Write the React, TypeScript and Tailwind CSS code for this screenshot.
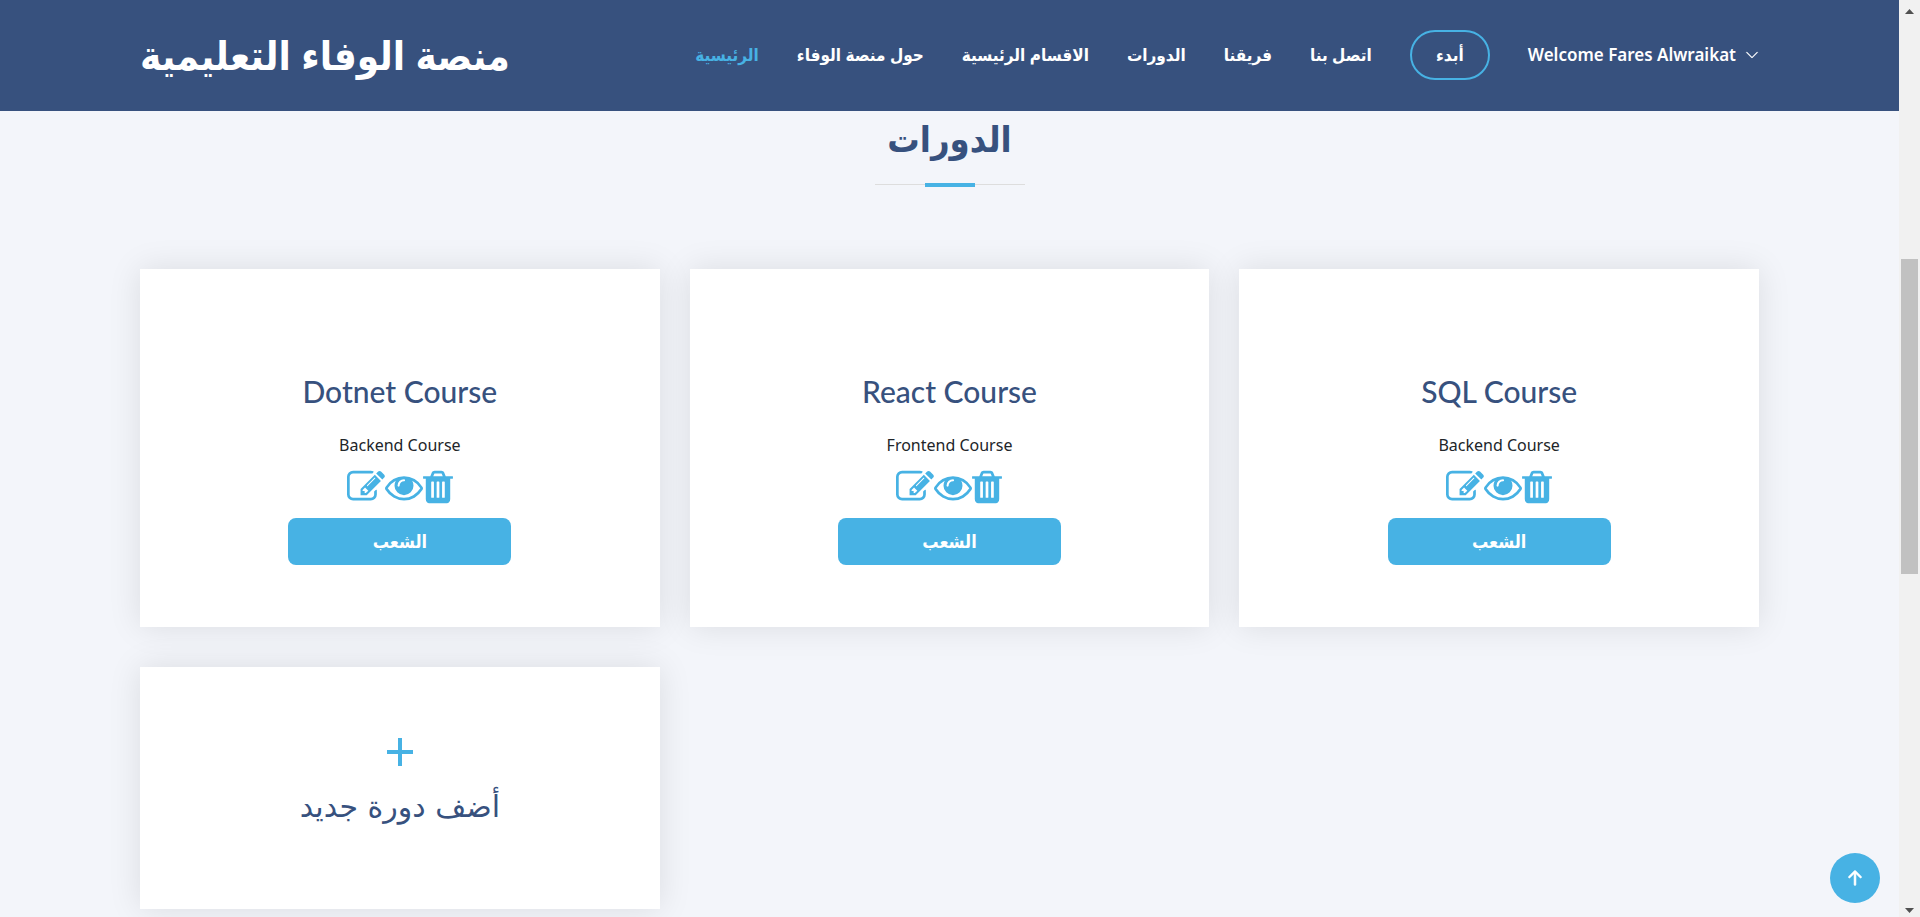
import React from "react";

const navLinks = [
  { label: "الرئيسية", href: "#hero", active: true },
  { label: "حول منصة الوفاء", href: "#about" },
  { label: "الاقسام الرئيسية", href: "#sections" },
  { label: "الدورات", href: "#courses" },
  { label: "فريقنا", href: "#team" },
  { label: "اتصل بنا", href: "#contact" },
];

const courses = [
  { title: "Dotnet Course", category: "Backend Course" },
  { title: "React Course", category: "Frontend Course" },
  { title: "SQL Course", category: "Backend Course" },
];

function EditIcon() {
  return (
    <svg className="h-[38px] w-[38px]" viewBox="0 0 1792 1792" fill="currentColor" aria-hidden="true">
      <path d="M888 1184l116-116-152-152-116 116v56h96v96h56zM1328 464q-16-16-33 1l-350 350q-17 17-1 33t33-1l350-350q17-17 1-33zM1408 1058v190q0 119-84.500 203.500t-203.500 84.500h-832q-119 0-203.500-84.500t-84.500-203.500v-832q0-119 84.500-203.500t203.500-84.500h832q63 0 117 25 15 7 18 23 3 17-9 29l-49 49q-14 14-32 8-23-6-45-6h-832q-66 0-113 47t-47 113v832q0 66 47 113t113 47h832q66 0 113-47t47-113v-126q0-13 9-22l64-64q15-15 35-7t20 29zM1312 320l288 288-672 672h-288v-288zM1756 452l-92 92-288-288 92-92q28-28 68-28t68 28l152 152q28 28 28 68t-28 68z" />
    </svg>
  );
}

function EyeIcon() {
  return (
    <svg className="h-[38px] w-[38px]" viewBox="0 0 1792 1792" fill="currentColor" aria-hidden="true">
      <path d="M1664 960q-152-236-381-353 61 104 61 225 0 185-131.500 316.500t-316.500 131.500-316.500-131.500-131.500-316.500q0-121 61-225-229 117-381 353 133 205 333.500 326.500t434.500 121.500 434.500-121.500 333.500-326.500zM944 576q0-20-14-34t-34-14q-125 0-214.500 89.500t-89.500 214.500q0 20 14 34t34 14 34-14 14-34q0-86 61-147t147-61q20 0 34-14t14-34zM1792 960q0 34-20 69-140 230-376.500 368.500t-499.500 138.500-499.500-139-376.500-368q-20-35-20-69t20-69q140-229 376.500-368t499.500-139 499.500 139 376.500 368q20 35 20 69z" />
    </svg>
  );
}

function TrashIcon() {
  return (
    <svg className="h-[38px] w-[30px]" viewBox="192 0 1408 1792" fill="currentColor" aria-hidden="true">
      <path d="M704 1376v-704q0-14-9-23t-23-9h-64q-14 0-23 9t-9 23v704q0 14 9 23t23 9h64q14 0 23-9t9-23zM960 1376v-704q0-14-9-23t-23-9h-64q-14 0-23 9t-9 23v704q0 14 9 23t23 9h64q14 0 23-9t9-23zM1216 1376v-704q0-14-9-23t-23-9h-64q-14 0-23 9t-9 23v704q0 14 9 23t23 9h64q14 0 23-9t9-23zM672 384h448l-48-117q-7-9-17-11h-317q-10 2-17 11zM1600 416v64q0 14-9 23t-23 9h-96v948q0 83-47 143.500t-113 60.500h-832q-66 0-113-58.500t-47-141.500v-952h-96q-14 0-23-9t-9-23v-64q0-14 9-23t23-9h309l70-167q15-37 54-63t79-26h320q40 0 79 26t54 63l70 167h309q14 0 23 9t9 23z" />
    </svg>
  );
}

function Header() {
  return (
    <header className="bg-[#37517e] pt-[30px] pb-[31px]">
      <div className="mx-auto flex w-full max-w-[1619px] items-center justify-between text-white">
        <a href="#hero" dir="rtl" className="text-[40px] leading-[50px] font-bold whitespace-nowrap">
          منصة الوفاء التعليمية
        </a>
        <nav className="flex items-center gap-[38px] text-[17px] leading-[26px] font-semibold whitespace-nowrap">
          {navLinks.map((link) => (
            <a key={link.href} href={link.href} dir="rtl" className={link.active ? "text-[#47b2e4]" : "text-white"}>
              {link.label}
            </a>
          ))}
          <a href="#start" dir="rtl" className="flex h-[50px] w-20 items-center justify-center rounded-full border-2 border-[#47b2e4]">
            أبدء
          </a>
          <button type="button" className="flex items-center gap-[9px]">
            Welcome Fares Alwraikat
            <svg className="h-[14px] w-[14px]" viewBox="0 0 16 16" fill="currentColor" aria-hidden="true">
              <path d="M1.646 4.646a.5.5 0 0 1 .708 0L8 10.293l5.646-5.647a.5.5 0 0 1 .708.708l-6 6a.5.5 0 0 1-.708 0l-6-6a.5.5 0 0 1 0-.708z" stroke="currentColor" strokeWidth="0.3" />
            </svg>
          </button>
        </nav>
      </div>
    </header>
  );
}

function CourseCard({ title, category }: { title: string; category: string }) {
  return (
    <article className="flex flex-col items-center bg-white pt-[104px] pb-[62px] shadow-[0_0_31px_rgba(0,0,0,0.1)]">
      <h3 className="font-[Lato] text-[30px] leading-9 font-medium text-[#37517e]">{title}</h3>
      <p className="mt-[22px] text-[16px] leading-7 text-[#212529]">{category}</p>
      <div className="mt-[9px] flex text-[#47b2e4]">
        <button type="button" aria-label="Edit"><EditIcon /></button>
        <button type="button" aria-label="View"><EyeIcon /></button>
        <button type="button" aria-label="Delete"><TrashIcon /></button>
      </div>
      <button type="button" dir="rtl" className="mt-3 h-[47px] w-[223px] rounded-lg bg-[#47b2e4] text-[18px] font-semibold text-white">
        الشعب
      </button>
    </article>
  );
}

function ScrollBar() {
  return (
    <div className="flex w-[21px] shrink-0 flex-col items-center bg-[#f1f1f1] text-[#505050]" aria-hidden="true">
      <svg className="h-[21px] w-[21px]" viewBox="0 0 21 21" fill="currentColor"><path d="M10.500 9L15 14H6z" /></svg>
      <div className="grow-[238]" />
      <div className="w-[17px] grow-[315] bg-[#c1c1c1]" />
      <div className="grow-[322]" />
      <svg className="h-[21px] w-[21px]" viewBox="0 0 21 21" fill="currentColor"><path d="M10.500 17L6 12h9z" /></svg>
    </div>
  );
}

export default function App() {
  return (
    <div className="flex h-screen overflow-hidden bg-[#f3f5fa] font-['Noto_Sans','DejaVu_Sans_Condensed','DejaVu_Sans',sans-serif]">
      <div className="min-w-0 flex-1 overflow-hidden">
        <Header />
        <main className="mx-auto w-full max-w-[1619px]">
          <div className="flex flex-col items-center">
            <h2 dir="rtl" className="text-[36px] leading-[56px] font-bold text-[#37517e]">الدورات</h2>
            <div className="mt-4 flex h-1 w-[150px] items-center justify-center bg-[linear-gradient(#ddd,#ddd)] bg-[length:100%_1px] bg-[position:0_1px] bg-no-repeat">
              <div className="h-1 w-[50px] bg-[#47b2e4]" />
            </div>
          </div>
          <div className="mt-[82px] grid grid-cols-3 gap-x-[30px] gap-y-10">
            {courses.map((course) => (
              <CourseCard key={course.title} {...course} />
            ))}
            <a href="#add" className="flex flex-col items-center bg-white pt-[71px] pb-[77px] shadow-[0_0_31px_rgba(0,0,0,0.1)]">
              <svg className="h-7 w-7 text-[#47b2e4]" viewBox="0 0 28 28" fill="currentColor" aria-hidden="true">
                <path d="M12 0h4v12h11v4H16v12h-4V16H1v-4h11z" />
              </svg>
              <h3 dir="rtl" className="mt-4 font-['DejaVu_Sans',sans-serif] text-[30px] leading-[50px] font-medium text-[#37517e]">أضف دورة جديد</h3>
            </a>
          </div>
        </main>
      </div>
      <a href="#top" aria-label="Back to top" className="fixed right-10 bottom-[14px] flex h-[50px] w-[50px] items-center justify-center rounded-full bg-[#47b2e4] text-white">
        <svg className="h-[30px] w-[30px]" viewBox="0 0 16 16" fill="currentColor" aria-hidden="true">
          <path fillRule="evenodd" d="M8 12a.5.5 0 0 0 .5-.5V5.707l2.146 2.147a.5.5 0 0 0 .708-.708l-3-3a.5.5 0 0 0-.708 0l-3 3a.5.5 0 1 0 .708.708L7.500 5.707V11.500a.5.5 0 0 0 .5.5z" stroke="currentColor" strokeWidth="0.3" />
        </svg>
      </a>
      <ScrollBar />
    </div>
  );
}
